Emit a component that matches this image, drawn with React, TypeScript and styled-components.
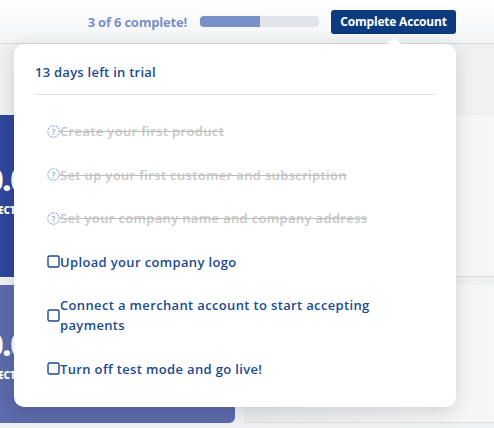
import React from "react";
import styled, { createGlobalStyle } from "styled-components";

const Global = createGlobalStyle`
  html, body { margin: 0; padding: 0; }
  body {
    background: #eef0f2;
    font-family: "Open Sans", "Liberation Sans", sans-serif;
    width: 494px;
    height: 428px;
    overflow: hidden;
  }
`;

const Page = styled.div`
  position: relative;
  width: 494px;
  height: 428px;
  overflow: hidden;
`;

const Header = styled.header`
  height: 43px;
  background: linear-gradient(#ffffff, #f2f3f5);
  border-bottom: 1px solid #d8dadd;
  display: flex;
  align-items: center;
  justify-content: flex-end;
  padding-right: 38px;
  box-sizing: content-box;
`;

const Progress = styled.span`
  font-size: 13px;
  font-weight: 700;
  color: #7b8fc7;
  margin-right: 13px;
  letter-spacing: -0.2px;
`;

const Bar = styled.div`
  width: 119px;
  height: 11px;
  border-radius: 4px;
  background: #e1e5ea;
  overflow: hidden;
  margin-right: 12px;
`;

const Fill = styled.div`
  height: 100%;
  background: #7890c8;
`;

const CTA = styled.button`
  height: 24px;
  width: 125px;
  padding: 0;
  border: none;
  border-radius: 3px;
  background: #0b3a7e;
  color: #fff;
  font-family: inherit;
  font-size: 12px;
  font-weight: 700;
  letter-spacing: -0.2px;
`;

const Main = styled.main`
  display: grid;
  grid-template-columns: 235px 1fr;
  grid-template-rows: 162px 138px;
  column-gap: 9px;
  row-gap: 8px;
  padding-top: 71px;
`;

const StatCard = styled.div<{ $bg: string; $top: number }>`
  background: ${(p) => p.$bg};
  border-radius: 0 0 6px 0;
  color: #fff;
  display: flex;
  flex-direction: column;
  margin-left: -40px;
  padding-left: 26px;
  padding-top: ${(p) => p.$top}px;
`;

const Big = styled.div`
  font-size: 30px;
  font-weight: 800;
  line-height: 34px;
  letter-spacing: -1px;
`;

const Small = styled.div`
  font-size: 10px;
  font-weight: 800;
  margin-top: 6px;
  margin-left: 12px;
`;

const LightCard = styled.div`
  background: linear-gradient(90deg, #e9eaec, #f7f7f8);
  border-bottom: 1px solid #dcdde0;
`;

const Popover = styled.div`
  position: absolute;
  top: 44px;
  left: 14px;
  width: 442px;
  height: 363px;
  background: #fff;
  border-radius: 10px;
  box-shadow: 0 4px 18px rgba(0, 0, 0, 0.14);
  padding: 0 21px;
  box-sizing: border-box;
`;

const Caret = styled.div`
  position: absolute;
  top: -6px;
  left: 373px;
  width: 0;
  height: 0;
  border-left: 7px solid transparent;
  border-right: 7px solid transparent;
  border-bottom: 6px solid #fff;
`;

const Title = styled.div`
  height: 51px;
  border-bottom: 1px solid #e4e4e4;
  font-size: 13px;
  font-weight: 600;
  color: #1c4a92;
  line-height: 20px;
  padding-top: 18px;
  box-sizing: border-box;
  letter-spacing: 0.25px;
`;

const List = styled.ul`
  list-style: none;
  margin: 0;
  padding: 26px 0 0 12px;
  display: flex;
  flex-direction: column;
  gap: 23.5px;
`;

const Item = styled.li<{ $done: boolean }>`
  display: flex;
  align-items: center;
  width: 345px;
  font-size: 13px;
  font-weight: 600;
  line-height: 20px;
  letter-spacing: 0.35px;
  color: ${(p) => (p.$done ? "#c8c8c8" : "#1c4a92")};
  text-decoration: ${(p) => (p.$done ? "line-through" : "none")};
  text-decoration-color: ${(p) => (p.$done ? "#bcbcbc" : "inherit")};
`;

const IconBox = styled.span`
  flex: none;
  width: 13px;
  height: 13px;
  display: flex;
`;

const Pending = () => (
  <IconBox>
    <svg width="13" height="13" viewBox="0 0 13 13">
      <rect x="1" y="1" width="11" height="11" rx="1.5" fill="none" stroke="#1c4a92" strokeWidth="1.4" />
    </svg>
  </IconBox>
);

const Done = () => (
  <IconBox>
    <svg width="13" height="13" viewBox="0 0 13 13">
      <circle cx="6.5" cy="6.5" r="5.7" fill="none" stroke="#6f8bcb" strokeWidth="1.1" strokeDasharray="1.1 1.1" />
      <text x="6.5" y="9.6" textAnchor="middle" fontSize="8.5" fill="#8aa0d2" fontFamily="Open Sans, sans-serif">?</text>
    </svg>
  </IconBox>
);

const items = [
  { t: "Create your first product", d: true },
  { t: "Set up your first customer and subscription", d: true },
  { t: "Set your company name and company address", d: true },
  { t: "Upload your company logo", d: false },
  { t: "Connect a merchant account to start accepting payments", d: false },
  { t: "Turn off test mode and go live!", d: false },
];

export default function App() {
  return (
    <Page>
      <Global />
      <Header>
        <Progress>3 of 6 complete!</Progress>
        <Bar>
          <Fill style={{ width: "50%" }} />
        </Bar>
        <CTA>Complete Account</CTA>
      </Header>
      <Main>
        <StatCard $bg="#2f479b" $top={48}>
          <Big>0.0</Big>
          <Small>ECT</Small>
        </StatCard>
        <LightCard />
        <StatCard $bg="#5b6bab" $top={43}>
          <Big>0.0</Big>
          <Small>ECT</Small>
        </StatCard>
        <LightCard />
      </Main>
      <Popover>
        <Caret />
        <Title>13 days left in trial</Title>
        <List>
          {items.map((it) => (
            <Item key={it.t} $done={it.d}>
              {it.d ? <Done /> : <Pending />}
              <span>{it.t}</span>
            </Item>
          ))}
        </List>
      </Popover>
    </Page>
  );
}
